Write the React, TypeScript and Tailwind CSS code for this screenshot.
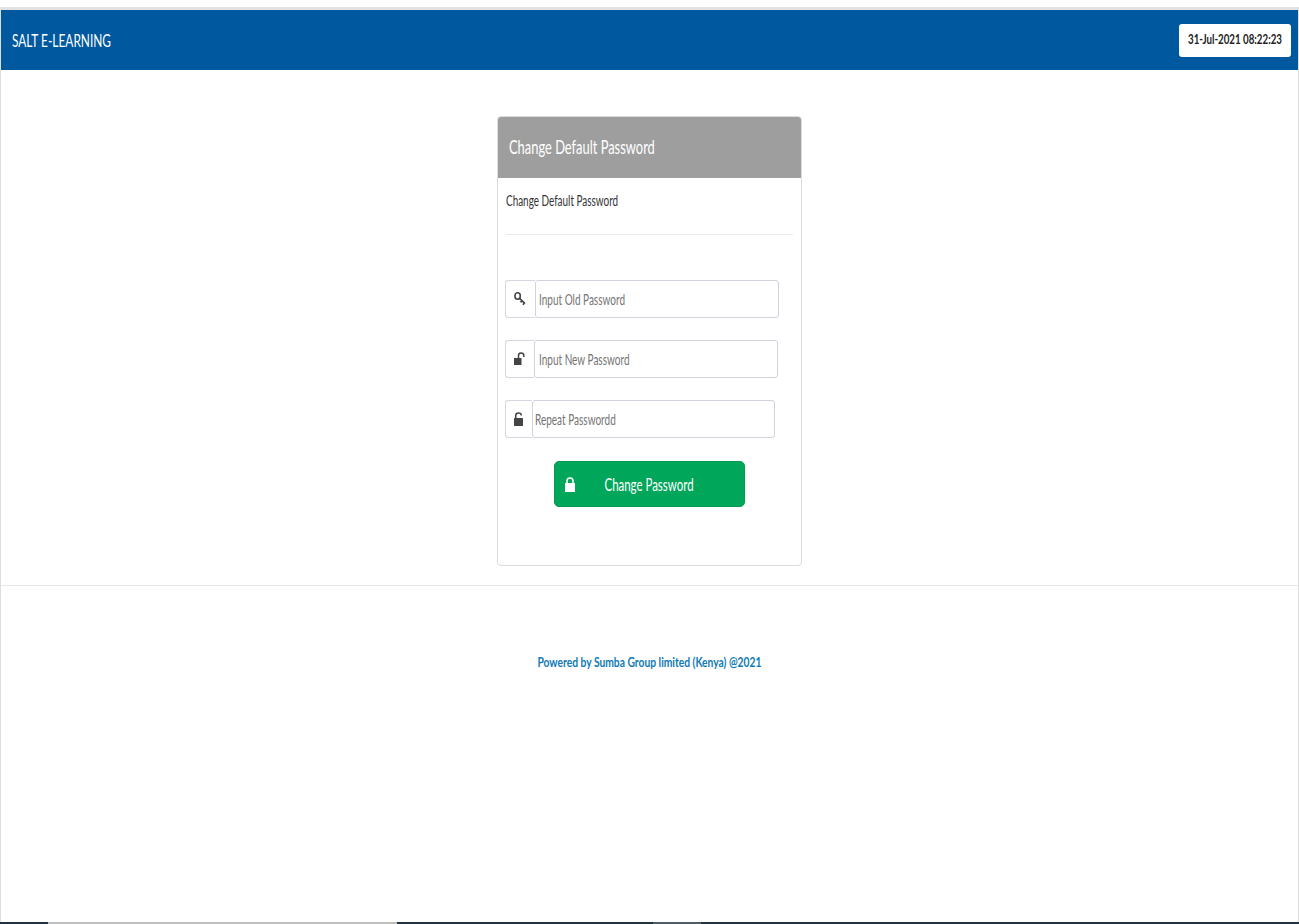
import type { ReactNode } from 'react'

const squeeze = 'inline-block origin-left whitespace-nowrap'

function KeyIcon() {
  return (
    <svg width="12" height="14" viewBox="0 0 12 14" fill="none" stroke="#444" strokeWidth="1.6">
      <ellipse cx="3.6" cy="4" rx="2.7" ry="3.2" />
      <path d="M5.6 6.4 L11 11.6 M8 8.8 L6.6 10.4 M10.4 11 L9 12.8" />
    </svg>
  )
}

function OpenLockIcon() {
  return (
    <svg width="11" height="14" viewBox="0 0 11 14" fill="none">
      <rect x="0" y="6" width="7.5" height="7" fill="#444" />
      <path d="M4.5 6 V3.5 Q4.5 1 7 1 Q9.8 1 9.8 3.5 V5" stroke="#444" strokeWidth="1.5" />
    </svg>
  )
}

function UnlockAltIcon() {
  return (
    <svg width="9" height="14" viewBox="0 0 9 14" fill="none">
      <rect x="0" y="6" width="9" height="8" rx="0.6" fill="#444" />
      <path d="M1.8 6 V3.5 Q1.8 1 4.5 1 Q7.2 1 7.2 3 V3.4" stroke="#444" strokeWidth="1.5" />
    </svg>
  )
}

function LockIcon() {
  return (
    <svg width="10" height="15" viewBox="0 0 10 15" fill="none">
      <rect x="0" y="6" width="10" height="9" rx="0.6" fill="#fff" />
      <path d="M2 6.5 V4 Q2 1 5 1 Q8 1 8 4 V6.5" stroke="#fff" strokeWidth="1.6" />
    </svg>
  )
}

function PasswordField({ icon, placeholder, width, addon, pad }: { icon: ReactNode; placeholder: string; width: string; addon: string; pad: string }) {
  return (
    <div className={`flex h-[38px] ${width}`}>
      <div className={`flex ${addon} items-center justify-center rounded-l-[3px] border border-r-0 border-[#d6d6e0] text-[#444]`}>
        {icon}
      </div>
      <div className={`flex flex-1 items-center overflow-hidden rounded-[3px] border border-[#d2d2de] ${pad} pb-[1px] text-[16px] text-[#757575]`}>
        <span className={`${squeeze} scale-x-[0.625]`}>{placeholder}</span>
      </div>
    </div>
  )
}

export default function App() {
  return (
    <div className="flex h-[924px] flex-col overflow-hidden bg-white font-['Lato',sans-serif]">
      <div className="h-[7px] shrink-0 bg-white" />
      <div className="flex flex-1 flex-col border-x border-t-[3px] border-x-[#dedede] border-t-[#e2e2e2]">
        <header className="flex h-[60px] shrink-0 items-center justify-between bg-[#00589e] pl-[11px] pr-[7px] text-white">
          <span className={`${squeeze} scale-x-[0.70] pt-[2px] text-[17px]`}>SALT E-LEARNING</span>
          <div className="flex h-[33px] w-[112px] items-center overflow-hidden rounded-[3px] bg-white pl-[9px] text-[13px] font-bold text-[#222]">
            <span className={`${squeeze} scale-x-[0.75]`}>31-Jul-2021 08:22:23</span>
          </div>
        </header>

        <main className="flex h-[516px] shrink-0 justify-center border-b border-[#e8e8e8] pt-[46px]">
          <section className="ml-[-1px] h-[450px] w-[305px] overflow-hidden rounded-[4px] border border-[#dcdcdc]">
            <div className="flex h-[61px] items-center bg-[#9e9e9e] pb-[4px] pl-[11px] text-[20px] text-white">
              <span className={`${squeeze} scale-x-[0.645]`}>Change Default Password</span>
            </div>
            <div className="px-[8px]">
              <p className="mt-[12px] text-[15.5px] leading-[20px] text-[#333]">
                <span className={`${squeeze} scale-x-[0.64]`}>Change Default Password</span>
              </p>
              <hr className="mt-[24px] border-[#e9e9e9]" />
              <div className="ml-[-1px] mt-[45px] flex flex-col gap-[22px]">
                <PasswordField icon={<KeyIcon />} placeholder="Input Old Password" width="w-[274px]" addon="w-[30px]" pad="pl-[3px]" />
                <PasswordField icon={<OpenLockIcon />} placeholder="Input New Password" width="w-[273px]" addon="w-[29px]" pad="pl-[4px]" />
                <PasswordField icon={<UnlockAltIcon />} placeholder="Repeat Passwordd" width="w-[270px]" addon="w-[27px]" pad="pl-[2px]" />
              </div>
              <button className="relative ml-[48px] mt-[23px] flex h-[46px] w-[191px] items-center justify-center rounded-[5px] border border-[#019a53] bg-[#00a65a] pt-[3px] text-[17.5px] text-white">
                <span className="absolute left-[10px] top-[15px] flex">
                  <LockIcon />
                </span>
                <span className="inline-block scale-x-[0.655] whitespace-nowrap">Change Password</span>
              </button>
            </div>
          </section>
        </main>

        <footer className="pt-[65px] text-center text-[14px] font-bold text-[#0f7ab5]">
          <span className="inline-block scale-x-[0.735] whitespace-nowrap">Powered by Sumba Group limited (Kenya) @2021</span>
        </footer>
      </div>
      <div className="flex h-[2px] shrink-0 bg-[#1f3340]">
        <div className="ml-[48px] h-full w-[349px] bg-[#bdbdbd]" />
        <div className="ml-[256px] h-full w-[48px] bg-[#4d5d68]" />
      </div>
    </div>
  )
}
